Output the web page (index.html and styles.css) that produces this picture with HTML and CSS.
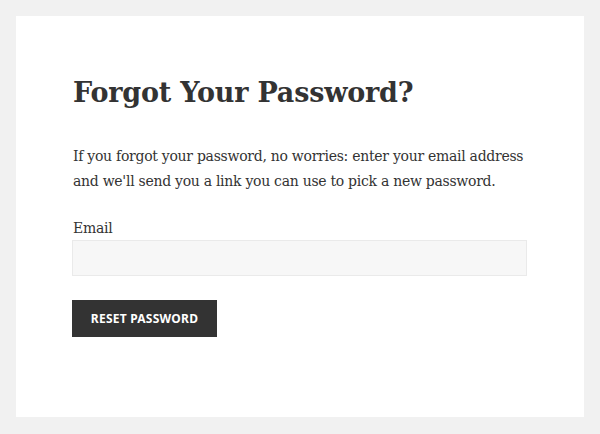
FILE: index.html
```html
<!DOCTYPE html>
<html lang="en">
<head>
<meta charset="utf-8">
<title>Forgot Your Password?</title>
<link rel="stylesheet" href="styles.css">
</head>
<body>
<main class="card">
  <h1 class="title">Forgot Your Password?</h1>
  <p class="intro">If you forgot your password, no worries: enter your email address and we'll send you a link you can use to pick a new password.</p>
  <form class="form">
    <label class="label" for="email">Email</label>
    <input class="input" id="email" type="email">
    <button class="button" type="button">Reset Password</button>
  </form>
</main>
</body>
</html>
```
FILE: styles.css
```css
html, body {
  margin: 0;
  padding: 0;
}
body {
  background: #f1f1f1;
  padding: 16px;
  font-family: "DejaVu Serif", "Liberation Serif", serif;
  color: #333;
}
.card {
  box-sizing: border-box;
  background: #fff;
  width: 568px;
  height: 401px;
  padding: 56px 50px 0 56px;
}
.title {
  margin: 0 0 0 1px;
  font-size: 27px;
  letter-spacing: -0.2px;
  line-height: 42px;
  font-weight: bold;
  color: #333;
}
.intro {
  margin: 30px 0 0 1px;
  font-size: 14px;
  letter-spacing: -0.28px;
  line-height: 25px;
}
.form {
  display: flex;
  flex-direction: column;
  align-items: flex-start;
}
.label {
  margin: 22px 0 0 1px;
  font-size: 14px;
  letter-spacing: -0.28px;
  line-height: 24px;
}
.input {
  box-sizing: border-box;
  width: 455px;
  height: 36px;
  margin: 0;
  background: #f7f7f7;
  border: 1px solid #eaeaea;
  border-radius: 0;
}
.button {
  margin-top: 24px;
  box-sizing: border-box;
  width: 145px;
  height: 37px;
  background: #333;
  color: #fff;
  border: 0;
  border-radius: 0;
  font-family: "Noto Sans", sans-serif;
  font-weight: bold;
  font-size: 12px;
  text-transform: uppercase;
  letter-spacing: 0.02em;
}
```
